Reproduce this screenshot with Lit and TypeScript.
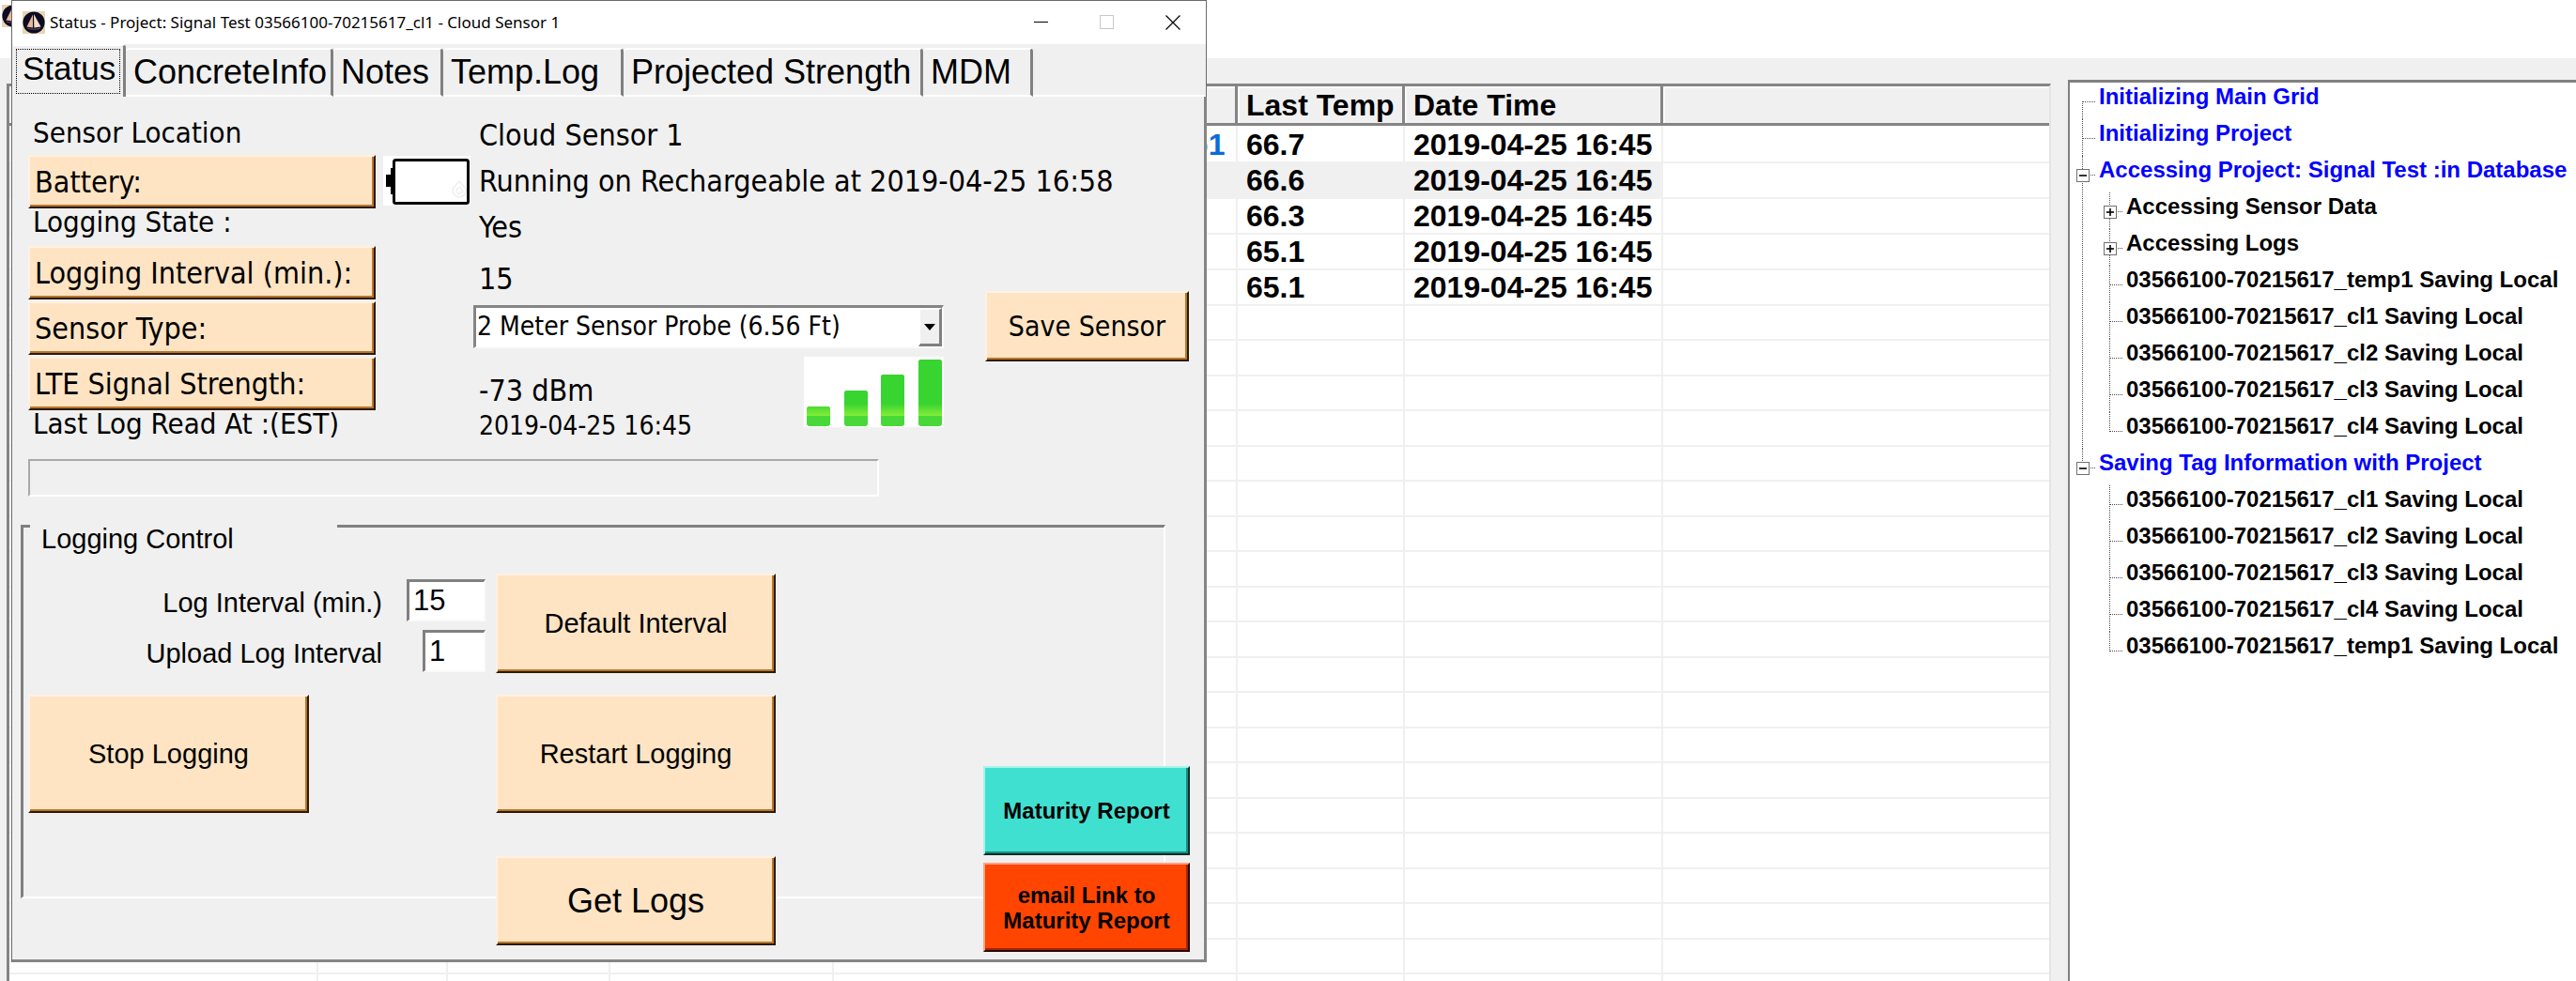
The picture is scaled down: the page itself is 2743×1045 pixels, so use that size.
import { LitElement, html, svg, css, nothing } from "lit";
import { customElement, state } from "lit/decorators.js";
import { classMap } from "lit/directives/class-map.js";

interface TreeItem {
  label: string;
  open?: boolean;
  expandable?: boolean;
  children?: TreeItem[];
}

const sailLogo = html`<svg width="24" height="24" viewBox="0 0 24 24" aria-hidden="true">
  <rect width="24" height="24" fill="#e9d3b4" />
  <circle cx="12" cy="12" r="11.6" fill="#0b0c22" />
  <path d="M11 3.5 L4.5 16.5 L11 17.5 Z" fill="#e8b79c" />
  <path d="M12 3 L12.3 17.5 L19.5 16.5 Z" fill="#f6dcc6" />
  <path d="M4.5 17.6 Q12 19.4 19.5 17.6 L18.4 19 Q12 20.4 5.6 19 Z" fill="#5c4450" />
</svg>`;

/* ------------------------------------------------------------------ */

@customElement("sensor-grid")
export class SensorGrid extends LitElement {
  static styles = css`
    :host {
      display: block;
      overflow: hidden;
      box-sizing: border-box;
      border-top: 3px solid #848484;
      border-left: 3px solid #848484;
      border-right: 2px solid #e4e4e4;
      background: #fff;
    }
    .grid {
      width: 100%;
      table-layout: fixed;
      border-collapse: separate;
      border-spacing: 0;
      font: bold 32px/36px "Liberation Sans", Arial, sans-serif;
      color: #000;
    }
    .grid th {
      box-sizing: border-box;
      height: 42px;
      padding: 0 0 0 9px;
      text-align: left;
      white-space: nowrap;
      background: #f0f0f0;
      border-right: 3px solid #848484;
      border-bottom: 3px solid #848484;
      box-shadow: inset 2px 2px #fafafa;
    }
    .grid th:last-child {
      border-right: 0;
    }
    .grid td {
      box-sizing: border-box;
      height: 38px;
      padding: 0 0 0 9px;
      white-space: nowrap;
      border-right: 2px solid #f0f0f0;
      border-bottom: 2px solid #f0f0f0;
    }
    .grid tr:nth-child(even) td {
      height: 37px;
    }
    .grid tbody tr:first-child td {
      height: 40px;
      padding-top: 2px;
    }
    .grid td:last-child {
      border-right: 0;
    }
    .grid .shaded td:not(:last-child) {
      background: #f0f0f0;
    }
    .grid .tag {
      color: #0a6bd8;
    }
    .c1 { width: 329px; }
    .c2 { width: 138px; }
    .c3 { width: 173px; }
    .c4 { width: 238px; }
    .c5 { width: 430px; }
    .c6 { width: 178px; }
    .c7 { width: 275px; }
  `;

  private rows = [
    ["03566100-70215617_temp1", "66.7", "2019-04-25 16:45"],
    ["", "66.6", "2019-04-25 16:45"],
    ["", "66.3", "2019-04-25 16:45"],
    ["", "65.1", "2019-04-25 16:45"],
    ["", "65.1", "2019-04-25 16:45"],
    ...Array.from({ length: 20 }, () => ["", "", ""]),
  ];

  render() {
    return html`<table class="grid">
      <colgroup>
        <col class="c1" /><col class="c2" /><col class="c3" /><col class="c4" />
        <col class="c5" /><col class="c6" /><col class="c7" /><col />
      </colgroup>
      <thead>
        <tr>
          <th></th><th></th><th></th><th></th><th></th>
          <th scope="col">Last Temp</th>
          <th scope="col">Date Time</th>
          <th></th>
        </tr>
      </thead>
      <tbody>
        ${this.rows.map(
          ([tag, temp, time], i) => html`<tr class=${classMap({ shaded: i === 1 })}>
            <td></td><td></td><td></td><td></td>
            <td class="tag">${tag}</td>
            <td>${temp}</td>
            <td>${time}</td>
            <td></td>
          </tr>`
        )}
      </tbody>
    </table>`;
  }
}

/* ------------------------------------------------------------------ */

@customElement("log-tree")
export class LogTree extends LitElement {
  static styles = css`
    :host {
      display: block;
      box-sizing: border-box;
      overflow: hidden;
      border-top: 3px solid #808080;
      border-left: 2px solid #808080;
      background: #fff;
      font: bold 24px/30px "Liberation Sans", Arial, sans-serif;
      color: #000;
    }
    ul {
      list-style: none;
      margin: 0;
      padding: 0;
    }
    ul ul {
      padding-left: 29px;
    }
    .root > li > .row {
      color: #0000ff;
    }
    li {
      position: relative;
    }
    li::before {
      content: "";
      position: absolute;
      left: 13px;
      top: 0;
      bottom: 0;
      border-left: 1px dotted #505050;
    }
    li:last-child::before {
      bottom: auto;
      height: 21px;
    }
    .root > li:first-child::before {
      top: 20px;
    }
    .row {
      position: relative;
      display: flex;
      height: 39px;
      white-space: nowrap;
    }
    .gutter {
      flex: none;
      box-sizing: border-box;
      width: 31px;
      padding: 14px 0 0 7px;
    }
    .gutter::before {
      content: "";
      position: absolute;
      left: 14px;
      top: 20px;
      width: 13px;
      border-top: 1px dotted #505050;
    }
    .toggle {
      position: relative;
      display: block;
      box-sizing: border-box;
      width: 14px;
      height: 14px;
      padding: 0;
      border: 1px solid #707070;
      background: #fff;
    }
    .toggle svg {
      display: block;
    }
  `;

  @state() private items: TreeItem[] = [
    { label: "Initializing Main Grid" },
    { label: "Initializing Project" },
    {
      label: "Accessing Project: Signal Test :in Database",
      expandable: true,
      open: true,
      children: [
        { label: "Accessing Sensor Data", expandable: true },
        { label: "Accessing Logs", expandable: true },
        { label: "03566100-70215617_temp1 Saving Local" },
        { label: "03566100-70215617_cl1 Saving Local" },
        { label: "03566100-70215617_cl2 Saving Local" },
        { label: "03566100-70215617_cl3 Saving Local" },
        { label: "03566100-70215617_cl4 Saving Local" },
      ],
    },
    {
      label: "Saving Tag Information with Project",
      expandable: true,
      open: true,
      children: [
        { label: "03566100-70215617_cl1 Saving Local" },
        { label: "03566100-70215617_cl2 Saving Local" },
        { label: "03566100-70215617_cl3 Saving Local" },
        { label: "03566100-70215617_cl4 Saving Local" },
        { label: "03566100-70215617_temp1 Saving Local" },
      ],
    },
  ];

  private toggle(item: TreeItem) {
    item.open = !item.open;
    this.items = [...this.items];
  }

  private renderItem(item: TreeItem): unknown {
    return html`<li>
      <div class="row">
        <span class="gutter">
          ${item.expandable
            ? html`<button
                class="toggle"
                type="button"
                aria-label=${item.label}
                aria-expanded=${item.open ? "true" : "false"}
                @click=${() => this.toggle(item)}
              >
                <svg width="12" height="12" viewBox="0 0 12 12" stroke="#000" stroke-width="1.6">
                  <path d="M2 6 H10" />
                  ${item.open ? nothing : svg`<path d="M6 2 V10" />`}
                </svg>
              </button>`
            : nothing}
        </span>
        <span>${item.label}</span>
      </div>
      ${item.open && item.children
        ? html`<ul>${item.children.map((c) => this.renderItem(c))}</ul>`
        : nothing}
    </li>`;
  }

  render() {
    return html`<ul class="root">${this.items.map((i) => this.renderItem(i))}</ul>`;
  }
}

/* ------------------------------------------------------------------ */

@customElement("status-dialog")
export class StatusDialog extends LitElement {
  static styles = css`
    :host {
      display: block;
      box-sizing: border-box;
      border-top: 1px solid #6a6a6a;
      border-left: 1px solid #6a6a6a;
      background: #f0f0f0;
      color: #000;
      font: 32px/36px "DejaVu Sans Condensed", "Noto Sans", sans-serif;
      white-space: nowrap;
    }
    button {
      margin: 0;
      font: inherit;
      color: inherit;
    }

    .titlebar {
      display: flex;
      align-items: center;
      height: 46px;
      padding-left: 11px;
      background: #fff;
      border-right: 1px solid #6a6a6a;
    }
    .title {
      flex: 1;
      margin: 0 0 0 5px;
      font: 17px/24px "Noto Sans", "Open Sans", sans-serif;
    }
    .winbtn {
      display: grid;
      place-items: center;
      width: 70px;
      height: 46px;
      padding: 0;
      border: 0;
      background: none;
    }

    .tabs {
      display: grid;
      grid-template-columns: 121px 221px 117px 192px 319px 117px 1fr;
      align-items: end;
      height: 56px;
      border-right: 1px solid #6a6a6a;
    }
    .tabs::after {
      content: "";
      border-bottom: 2px solid #fff;
    }
    .tab {
      box-sizing: border-box;
      height: 52px;
      padding: 0 0 0 8px;
      text-align: left;
      border: 0;
      border-top: 2px solid #fff;
      border-right: 3px solid #808080;
      border-bottom: 2px solid #fff;
      border-radius: 4px 4px 0 0;
      background: #f0f0f0;
      font: 36px/40px "Liberation Sans", Arial, sans-serif;
    }
    .tab.selected {
      height: 56px;
      padding: 3px 3px 4px 4px;
      border-bottom: 0;
      font-size: 35px;
    }
    .tab span {
      display: block;
    }
    .tab.selected span {
      box-sizing: border-box;
      height: 48px;
      padding-left: 6px;
      border: 1px dotted #000;
    }

    .panel {
      border-right: 3px solid #858585;
      border-bottom: 3px solid #858585;
      padding: 0 15px 8px 17px;
    }

    .info {
      display: grid;
      grid-template-columns: 370px 104px 501px 261px;
      height: 386px;
    }
    .labels {
      display: flex;
      flex-direction: column;
      padding-top: 20px;
    }
    .label {
      height: 42px;
      padding-left: 5px;
      font-size: 31px;
    }
    .label.tucked {
      margin-top: -4px;
      height: 44px;
    }
    .values {
      display: grid;
      grid-template-columns: minmax(0, 1fr);
      grid-template-rows: 49px 49px 55px 46px 73px 38px 36px;
      align-items: start;
      padding-top: 23px;
    }
    .value {
      grid-column: 1;
      padding-left: 6px;
    }
    .strength {
      grid-row: 6;
    }
    .small {
      grid-row: 7;
      font-size: 28px;
    }
    .battery {
      padding: 63px 0 0 8px;
    }
    .battery svg,
    .signal svg {
      display: block;
    }
    .signal {
      grid-column: 1;
      grid-row: 6 / 8;
      justify-self: end;
      margin-top: -18px;
    }
    .save {
      padding: 207px 0 0 44px;
    }

    .push {
      position: relative;
      box-sizing: border-box;
      padding: 0;
      text-align: center;
      background: #ffe4c4;
      border: 2px solid #fff1e2;
      border-right-color: #2b1a06;
      border-bottom-color: #2b1a06;
      box-shadow: inset -2px -2px #b9752b;
    }
    .push.field {
      height: 57px;
      padding-left: 5px;
      text-align: left;
    }
    .push.field + .push.field {
      margin-top: 2px;
    }
    .push.wide {
      width: 100%;
      height: 75px;
      font-size: 30px;
    }
    .push.action {
      font: 29px/36px "Liberation Sans", Arial, sans-serif;
    }
    .push.large {
      font-size: 36px;
    }
    .push.report {
      height: 95px;
      font: bold 24px/27px "Liberation Sans", Arial, sans-serif;
    }
    .teal {
      background: #40e0d0;
      border-color: #a8f4ec #08302c #08302c #a8f4ec;
      box-shadow: inset -2px -2px #208a80;
    }
    .orange {
      background: #ff4500;
      border-color: #ffa080 #2a0800 #2a0800 #ffa080;
      box-shadow: inset -2px -2px #a02800;
    }

    .combo {
      display: grid;
      height: 46px;
      box-sizing: border-box;
      border: 3px solid #858585;
      border-right: 2px solid #fafafa;
      border-bottom: 2px solid #fafafa;
      background: #fff;
    }
    .combo select {
      grid-area: 1 / 1;
      appearance: none;
      width: 100%;
      padding: 0 30px 1px 1px;
      border: 0;
      border-radius: 0;
      background: #fff;
      color: #000;
      font: 28px/36px "DejaVu Sans Condensed", "Noto Sans", sans-serif;
    }
    .arrow {
      grid-area: 1 / 1;
      justify-self: end;
      display: grid;
      place-items: center;
      box-sizing: border-box;
      width: 25px;
      border: 2px solid #fff;
      border-right: 3px solid #808080;
      border-bottom: 3px solid #808080;
      background: #f0f0f0;
      pointer-events: none;
    }

    .bar {
      box-sizing: border-box;
      width: 906px;
      height: 40px;
      margin-bottom: 30px;
      border: 2px solid #a8a8a8;
      border-right-color: #fff;
      border-bottom-color: #fff;
    }

    .control {
      display: grid;
      margin-left: -8px;
    }
    .frame {
      grid-area: 1 / 1;
      margin: 0 26px 57px 0;
      border: 3px solid #808080;
      border-right: 2px solid #fff;
      border-bottom: 2px solid #fff;
    }
    .heading {
      width: 315px;
      margin: -3px 0 0 7px;
      padding-left: 12px;
      background: #f0f0f0;
      font: 29px/30px "Liberation Sans", Arial, sans-serif;
    }
    .actions {
      grid-area: 1 / 1;
      display: grid;
      grid-template-columns: 498px 298px 1fr 220px;
      grid-template-rows: 106px 126px 125px;
      row-gap: 23px;
      padding: 52px 0 0 8px;
    }
    .default {
      grid-area: 1 / 2;
    }
    .stop {
      grid-area: 2 / 1;
      width: 299px;
    }
    .restart {
      grid-area: 2 / 2;
    }
    .get {
      grid-area: 3 / 2;
      height: 95px;
      margin-top: 23px;
    }
    .reports {
      grid-column: 4;
      grid-row: 1 / 4;
      display: flex;
      flex-direction: column;
      justify-content: end;
      gap: 8px;
    }
    .fields {
      grid-area: 1 / 1;
      display: grid;
      grid-template-columns: 377px 110px;
      grid-auto-rows: 45px;
      row-gap: 9px;
      padding-top: 6px;
      text-align: right;
      font: 29px/45px "Liberation Sans", Arial, sans-serif;
    }
    .fields label {
      padding-top: 3px;
    }
    .fields input {
      box-sizing: border-box;
      justify-self: end;
      width: 84px;
      height: 45px;
      padding: 0 0 0 4px;
      border: 3px solid #808080;
      border-right: 2px solid #fafafa;
      border-bottom: 2px solid #fafafa;
      border-radius: 0;
      background: #fff;
      color: #000;
      font: 31px/36px "Liberation Sans", Arial, sans-serif;
    }
    .fields .short {
      width: 67px;
    }
  `;

  @state() private tab = "Status";
  private tabs = ["Status", "ConcreteInfo", "Notes", "Temp.Log", "Projected Strength", "MDM"];

  private renderBattery() {
    return html`<svg width="93" height="53" viewBox="0 0 93 53" role="img" aria-label="Battery">
      <rect width="93" height="53" fill="#fff" />
      <path d="M11 13 H8 V20 H3 V33 H8 V41 H11 Z" fill="#000" />
      <rect x="11.5" y="4.5" width="79" height="46" rx="2" fill="#fff" stroke="#000" stroke-width="3" />
      <path d="M81 27 L74 35 Q73 43 81 44 Q89 43 88 35 Z M78 36 L82 33 L85 38 L80 41 Z"
        fill="none" stroke="#f0f0f0" stroke-width="1.5" />
    </svg>`;
  }

  private renderSignal() {
    const bars = [
      [3, 53],
      [43, 36],
      [82, 19],
      [122, 3],
    ];
    return html`<svg width="149" height="75" viewBox="0 0 149 75" role="img" aria-label="Signal">
      <defs>
        <linearGradient id="g" gradientUnits="userSpaceOnUse" x1="0" y1="50" x2="0" y2="63">
          <stop offset="0" stop-color="#38d430" />
          <stop offset="1" stop-color="#84ee38" />
        </linearGradient>
      </defs>
      <rect width="149" height="75" fill="#fff" />
      ${bars.map(
        ([x, y]) => svg`<rect x=${x} y=${y} width="25" height=${74 - y} rx="3" fill="#48d838" />
          <path d="M${x} 63 V${y + 3} Q${x} ${y} ${x + 3} ${y} H${x + 22} Q${x + 25} ${y} ${x + 25} ${y + 3} V63 Z" fill="url(#g)" />`
      )}
    </svg>`;
  }

  render() {
    return html`
      <div class="titlebar">
        ${sailLogo}
        <h1 class="title">Status - Project: Signal Test 03566100-70215617_cl1 - Cloud Sensor 1</h1>
        <button class="winbtn" type="button" aria-label="Minimize">
          <svg width="16" height="16" viewBox="0 0 16 16"><path d="M0 7.5 H15" stroke="#000" /></svg>
        </button>
        <button class="winbtn" type="button" aria-label="Maximize" disabled>
          <svg width="16" height="16" viewBox="0 0 16 16">
            <rect x="0.5" y="0.5" width="14" height="14" fill="none" stroke="#c8c8c8" />
          </svg>
        </button>
        <button class="winbtn" type="button" aria-label="Close">
          <svg width="16" height="16" viewBox="0 0 16 16">
            <path d="M0.5 0.5 L15.5 15.5 M15.5 0.5 L0.5 15.5" stroke="#000" stroke-width="1.2" />
          </svg>
        </button>
      </div>

      <div class="tabs" role="tablist">
        ${this.tabs.map(
          (t) => html`<button
            type="button"
            role="tab"
            aria-selected=${t === this.tab ? "true" : "false"}
            class=${classMap({ tab: true, selected: t === this.tab })}
            @click=${() => (this.tab = t)}
          >
            <span>${t}</span>
          </button>`
        )}
      </div>

      <div class="panel" role="tabpanel">
        <div class="info">
          <div class="labels">
            <div class="label">Sensor Location</div>
            <button class="push field" type="button">Battery:</button>
            <div class="label tucked">Logging State :</div>
            <button class="push field" type="button">Logging Interval (min.):</button>
            <button class="push field" type="button">Sensor Type:</button>
            <button class="push field" type="button">LTE Signal Strength:</button>
            <div class="label tucked">Last Log Read At :(EST)</div>
          </div>
          <div class="battery">${this.renderBattery()}</div>
          <div class="values">
            <div class="value">Cloud Sensor 1</div>
            <div class="value">Running on Rechargeable at 2019-04-25 16:58</div>
            <div class="value">Yes</div>
            <div class="value">15</div>
            <div class="combo">
              <select aria-label="Sensor Type">
                <option>2 Meter Sensor Probe (6.56 Ft)</option>
              </select>
              <span class="arrow">
                <svg width="12" height="7" viewBox="0 0 12 7"><path d="M0 0 H12 L6 7 Z" /></svg>
              </span>
            </div>
            <div class="value strength">-73 dBm</div>
            <div class="value small">2019-04-25 16:45</div>
            <div class="signal">${this.renderSignal()}</div>
          </div>
          <div class="save">
            <button class="push wide" type="button">Save Sensor</button>
          </div>
        </div>

        <div class="bar" role="progressbar" aria-label="Progress"></div>

        <section class="control">
          <div class="frame"><h2 class="heading">Logging Control</h2></div>
          <div class="actions">
            <div class="fields">
              <label for="log">Log Interval (min.)</label>
              <input id="log" type="text" value="15" />
              <label for="upload">Upload Log Interval</label>
              <input id="upload" class="short" type="text" value="1" />
            </div>
            <button class="push action default" type="button">Default Interval</button>
            <button class="push action stop" type="button">Stop Logging</button>
            <button class="push action restart" type="button">Restart Logging</button>
            <button class="push action large get" type="button">Get Logs</button>
            <div class="reports">
              <button class="push report teal" type="button">Maturity Report</button>
              <button class="push report orange" type="button">email Link to<br />Maturity Report</button>
            </div>
          </div>
        </section>
      </div>
    `;
  }
}

/* ------------------------------------------------------------------ */

@customElement("app-root")
export class AppRoot extends LitElement {
  static styles = css`
    :host {
      display: flex;
      flex-direction: column;
      position: relative;
      height: 100vh;
      overflow: hidden;
      background: #f0f0f0;
    }
    .caption {
      flex: none;
      box-sizing: border-box;
      height: 62px;
      padding: 5px 0 0 2px;
      background: #fff;
    }
    .main {
      flex: 1;
      min-height: 0;
      display: flex;
      gap: 18px;
      padding-left: 7px;
    }
    .sensors {
      flex: 1;
      min-width: 0;
      margin-top: 27px;
    }
    .log {
      flex: none;
      width: 541px;
      margin-top: 23px;
    }
    .dialog {
      position: absolute;
      top: 0;
      left: 12px;
      width: 1273px;
    }
  `;

  render() {
    return html`
      <div class="caption">${sailLogo}</div>
      <div class="main">
        <sensor-grid class="sensors"></sensor-grid>
        <log-tree class="log"></log-tree>
      </div>
      <status-dialog class="dialog"></status-dialog>
    `;
  }
}
